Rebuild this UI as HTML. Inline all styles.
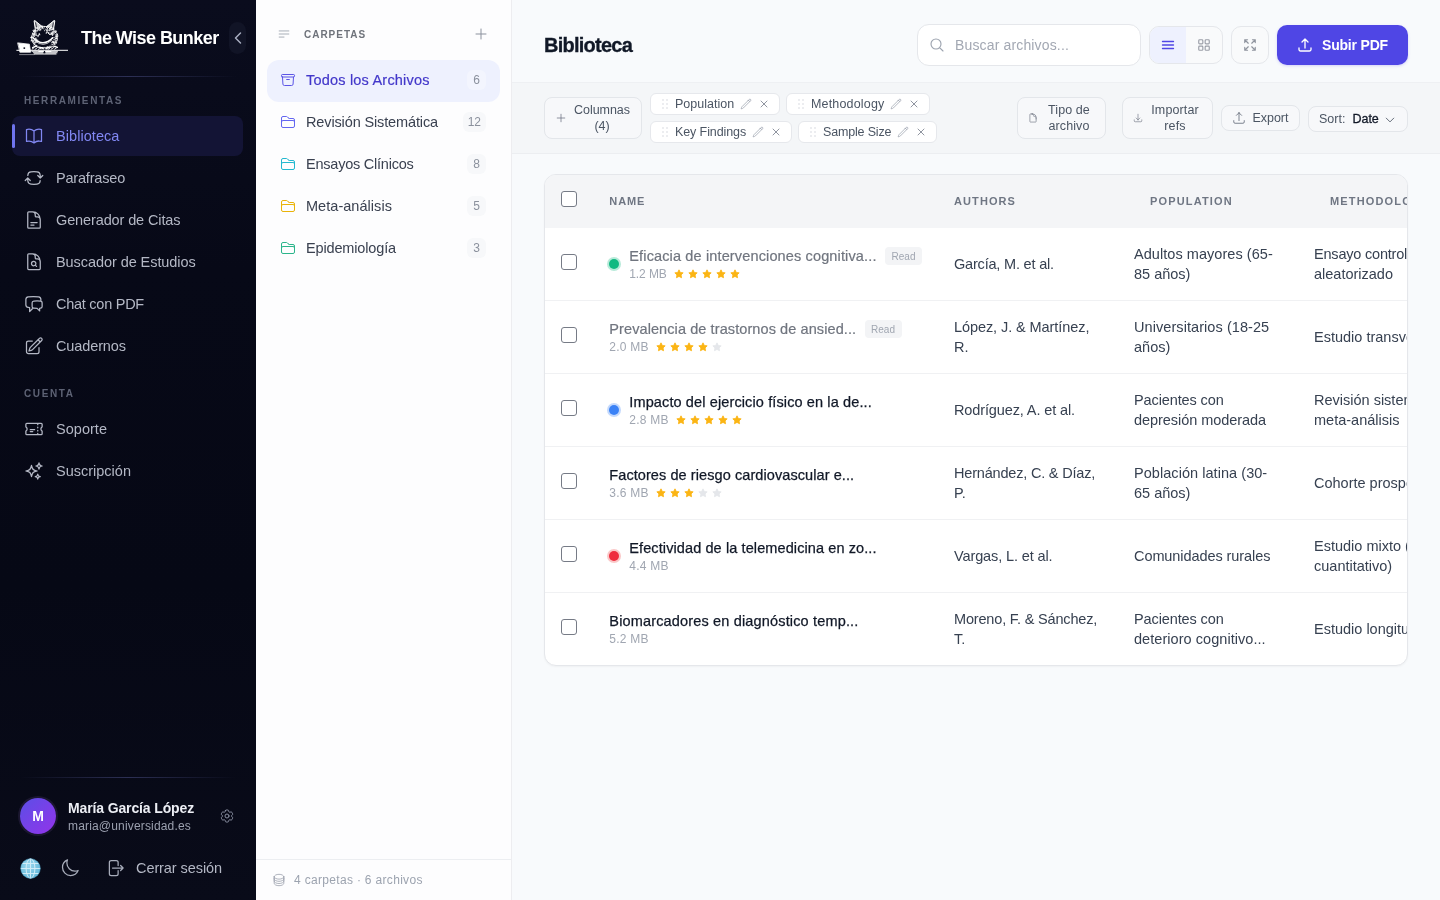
<!DOCTYPE html>
<html lang="es">
<head>
<meta charset="utf-8">
<title>Biblioteca</title>
<style>
*{box-sizing:border-box;margin:0;padding:0}
html,body{width:1440px;height:900px;overflow:hidden}
body{font-family:"Liberation Sans",sans-serif;background:#f8fafc;color:#111827;position:relative;-webkit-font-smoothing:antialiased}
.abs{position:absolute}
svg{display:block}
/* ---------- left sidebar ---------- */
#side{will-change:transform;position:absolute;left:0;top:0;width:256px;height:900px;background:linear-gradient(180deg,#0a0c1d 0%,#070917 30%,#060815 65%,#090b19 100%);color:#c9ccd6}
#side .brand{position:absolute;left:81px;top:27px;font-size:18px;font-weight:700;color:#fff;letter-spacing:-0.55px;white-space:nowrap;line-height:22px}
#side .collapse{position:absolute;left:229px;top:22px;width:17px;height:32px;border-radius:9px;background:#111426}
#side .hr{position:absolute;left:20px;width:216px;height:1px;background:linear-gradient(90deg,rgba(60,64,110,0),rgba(60,64,110,.7) 50%,rgba(60,64,110,0))}
#side .sec{position:absolute;left:24px;font-size:10px;letter-spacing:1.6px;color:#5d6274;font-weight:700;line-height:12px}
#side .item{position:absolute;left:12px;width:231px;height:40px;border-radius:8px;font-size:14.5px;color:#b4b8c5;line-height:40px;padding-left:44px;letter-spacing:0.05px;white-space:nowrap}
#side .item svg{position:absolute;left:12px;top:10px}
#side .item.on{background:#131435;color:#8187f2}
#side .item.on:before{content:"";position:absolute;left:0;top:8px;width:3px;height:24px;border-radius:2px;background:#6f74ee}
#side .avatar{position:absolute;left:20px;top:798px;width:36px;height:36px;border-radius:50%;background:linear-gradient(135deg,#5b4fe6,#9333ea);color:#fff;font-size:14px;font-weight:700;text-align:center;line-height:36px;box-shadow:0 0 0 2px #1b1730}
#side .uname{position:absolute;left:68px;top:799px;font-size:14px;font-weight:700;color:#eceef4;letter-spacing:-0.13px;line-height:18px;white-space:nowrap}
#side .umail{position:absolute;left:68px;top:818px;font-size:12px;color:#9ba0af;letter-spacing:0.17px;line-height:16px;white-space:nowrap}
#side .logout{position:absolute;left:136px;top:858px;font-size:14.5px;color:#b4b8c5;line-height:20px;letter-spacing:-0.08px;white-space:nowrap}
/* ---------- folders panel ---------- */
#folders{will-change:transform;position:absolute;left:256px;top:0;width:256px;height:900px;background:#fdfdfe;border-right:1px solid #ededf0}
#folders .ttl{position:absolute;left:48px;top:29px;font-size:10px;letter-spacing:0.98px;font-weight:700;color:#6f737b;line-height:12px}
#folders .f{position:absolute;left:11px;width:233px;height:42px;border-radius:12px;font-size:14.5px;color:#3a4150;line-height:40px;padding-left:39px;white-space:nowrap}
#folders .f svg{position:absolute;left:13px;top:12px}
#folders .f.on{background:#eef1fe;color:#4338ca;-webkit-text-stroke:0.2px #4338ca}
#folders .f .n{position:absolute;right:14px;top:10px;height:20px;min-width:19px;padding:0 5px;border-radius:6px;background:#f7f8fa;color:#8b919d;font-size:12px;line-height:20px;text-align:center;-webkit-text-stroke:0}
#folders .f.on .n{background:rgba(255,255,255,.3)}
#folders .foot{position:absolute;left:0;top:859px;width:255px;height:41px;border-top:1px solid #eceef1;font-size:12px;color:#9ca3af;line-height:40px;padding-left:38px;letter-spacing:0.32px}
/* ---------- main ---------- */
#main{will-change:transform;position:absolute;left:512px;top:0;width:928px;height:900px;background:#f8fafc}
#hdr{position:absolute;left:0;top:0;width:928px;height:83px;border-bottom:1px solid #eef0f3}
#hdr h1{position:absolute;left:32px;top:32px;font-size:20px;font-weight:700;letter-spacing:-0.75px;color:#111827;line-height:26px;-webkit-text-stroke:0.3px #111827}
#tool{position:absolute;left:0;top:83px;width:928px;height:71px;padding-top:0;background:#f4f6f8;border-bottom:1px solid #eceef1}
.btn{position:absolute;border:1px solid #e3e6ea;border-radius:8px;background:#f7f8fa;font-size:12.5px;color:#4b5563;line-height:16px;text-align:center;white-space:nowrap}
.chip{position:absolute;height:22px;border:1px solid #e6e8ec;border-radius:6px;background:#fff;font-size:12.5px;color:#4b5563;line-height:19px;white-space:nowrap}
.search{position:absolute;border:1px solid #e5e7eb;border-radius:12px;background:#fff}
.search span{position:absolute;left:37px;top:11px;font-size:14px;color:#a3a8b3;letter-spacing:0.15px;line-height:18px;white-space:nowrap}
.tog{position:absolute;border:1px solid #e5e7eb;border-radius:10px;background:#f9fafb;overflow:hidden}
.tog .tl{position:absolute;left:0;top:0;width:36px;height:36px;background:#eef1fe}
.upbtn{position:absolute;border-radius:10px;background:#4f46e5;box-shadow:0 1px 3px rgba(79,70,229,.22)}
.upbtn span{position:absolute;left:45px;top:11px;font-size:14px;font-weight:700;color:#fff;letter-spacing:-0.19px;line-height:18px;white-space:nowrap}
#card{position:absolute;border:1px solid #e5e7eb;border-radius:12px;background:#fff;overflow:hidden;box-shadow:0 1px 2px rgba(0,0,0,.04)}
#card>div{position:absolute}
#card .thead{left:0;top:0;width:864px;height:53px;background:#f4f5f7}
#card .th{font-size:11px;font-weight:700;color:#6f7683;line-height:14px;white-space:nowrap}
#card .cb{width:16px;height:16px;border:1px solid #767b86;border-radius:3px;background:#fff}
#card .sep{left:0;width:864px;height:1px;background:#f0f1f3}
#card .dot{width:10px;height:10px;border-radius:50%}
#card .ttl{font-size:14.5px;color:#111827;line-height:20px;white-space:nowrap;-webkit-text-stroke:0.25px #111827}
#card .ttl.rd{color:#70757f;-webkit-text-stroke:0.2px #70757f}
#card .sz{font-size:12px;color:#a0a6b1;line-height:16px;white-space:nowrap;letter-spacing:-0.1px}
#card .stars{display:inline-block;margin-left:7px;vertical-align:top;margin-top:1px}
#card .stars svg{display:inline-block;margin-right:4px}
#card .rb{width:36px;height:18px;border-radius:4px;background:#f3f4f6;color:#a0a6b1;font-size:10px;line-height:20px;text-align:center}
#card .td{font-size:14.5px;color:#374151;line-height:20px;white-space:nowrap;margin-top:-1px}
</style>
</head>
<body>
<div id="side">
  <div class="logo" style="position:absolute;left:10px;top:12px;width:70px;height:50px"><svg width="70" height="50" viewBox="0 0 70 50" fill="none" stroke-linecap="round" stroke-linejoin="round">
<g stroke="#fff">
<path d="M25.2 16.6 L24.1 8.9 Q24.3 8.2 25 8.7 L32.2 14.6" fill="#fff" fill-opacity=".8" stroke-width="1"/>
<path d="M36.6 14.6 L44 8.6 Q44.8 8.2 44.8 9 L43.6 16.8" fill="#fff" fill-opacity=".8" stroke-width="1"/>
<path d="M45.1 25.2L48.0 24.2M45.4 26.4L47.2 26.6M45.5 26.9L47.2 26.3M45.7 28.4L47.0 28.1M45.4 29.7L46.8 30.0M43.3 30.2L46.4 31.3M43.3 30.4L44.9 32.2M43.2 31.6L45.0 32.6M41.5 32.1L43.5 33.1M40.8 33.2L41.8 34.6M39.9 33.4L40.9 35.7M39.3 34.1L39.3 36.0M37.5 34.3L39.4 36.5M36.9 35.1L37.2 36.1M36.2 35.1L36.3 36.9M34.0 34.7L33.6 36.9M33.1 34.8L31.6 36.9M32.0 35.0L31.3 35.9M30.5 35.1L30.5 36.6M29.8 34.4L29.4 35.4M29.4 33.4L27.8 34.7M28.3 33.1L26.2 34.2M27.3 32.7L25.0 33.6M25.3 31.9L24.5 32.7M24.8 31.5L23.8 33.1M25.2 30.3L23.3 31.3M24.4 29.1L22.7 29.9M23.6 28.5L21.0 28.8M23.1 27.4L21.3 28.8M22.6 26.0L20.5 25.4M23.2 25.5L21.5 25.2M23.8 24.9L21.3 25.5M24.0 23.7L21.7 24.1M23.7 22.9L22.3 21.7M24.6 21.6L22.3 21.1M25.1 21.0L23.0 18.7M25.2 19.8L23.4 19.8M26.2 19.3L23.4 18.3M25.9 18.2L24.2 17.9M28.2 18.2L27.6 15.6M29.0 16.7L28.0 15.7M29.2 16.5L29.2 14.9M30.9 16.7L31.2 14.0M32.4 15.6L32.7 13.8M32.9 15.9L31.4 14.5M33.9 16.2L34.3 14.3M36.1 16.0L37.9 14.0M37.2 16.3L37.0 14.6M37.4 16.6L39.2 14.7M39.4 16.8L41.1 15.4M39.8 16.7L41.5 15.3M41.3 17.8L42.9 17.1M42.2 17.9L43.4 16.3M43.3 18.5L43.9 17.0M42.8 19.8L45.9 18.7M44.5 20.1L46.5 19.4M44.7 21.3L45.6 19.9M45.6 22.8L47.7 23.4M46.1 23.2L47.7 22.2M45.3 24.2L47.4 24.1M47.1 25.0L47.0 26.7M47.4 27.5L46.8 29.2M45.8 30.3L44.7 31.7M44.1 33.0L42.6 34.1M41.9 34.6L40.1 35.5M38.8 35.6L36.8 36.0M35.6 35.7L33.7 35.8M32.8 35.8L30.9 35.5M30.3 35.9L28.4 35.3M27.4 34.4L25.8 33.4M24.3 32.1L23.2 30.7M23.0 30.4L22.2 28.8M21.6 27.6L21.3 25.9M21.5 25.6L21.7 23.9M22.2 22.8L22.8 21.3M23.6 19.6L24.8 18.3M25.1 17.7L26.6 16.5M28.3 16.0L30.1 15.3M30.6 15.1L32.6 14.7M33.5 14.5L35.6 14.5M36.5 14.7L38.5 15.1M39.8 15.2L41.6 16.0M42.8 16.8L44.3 18.0M44.8 19.4L45.7 20.8M46.6 20.9L47.2 22.6M46.7 24.1L46.8 25.7M28.0 22.4l0.7 0.2M28.8 22.0l-1.0 0.8M28.0 23.4l-0.3 0.6M28.8 17.7l1.0 0.8M24.9 22.2l-1.2 0.0M27.6 22.8l-0.0 0.8M27.2 22.7l-0.4 0.5M24.7 19.6l0.8 0.0M25.1 18.4l1.3 0.3M27.3 16.5l0.7 0.3M29.2 21.4l0.5 0.5M24.1 22.4l-0.7 0.4M28.3 23.7l-0.2 1.1M27.2 21.0l-0.5 0.7M29.2 22.3l-0.5 1.1M29.0 22.5l1.2 0.3M24.9 21.2l-0.2 1.2M26.5 22.0l-0.1 0.8M27.5 21.6l0.7 0.1M26.0 22.6l-0.6 0.6M25.3 20.5l0.3 0.5M26.6 21.0l-0.7 0.7M27.4 23.2l-0.7 0.1M27.4 18.0l0.0 1.2M24.9 22.4l-0.7 1.1M25.1 23.7l-0.6 0.8M38.4 21.5l0.7 0.1M43.0 21.7l0.5 0.5M43.0 22.1l-1.0 0.4M39.8 22.1l0.6 0.7M41.5 22.4l0.9 0.9M42.8 19.7l0.9 0.9M39.4 22.4l0.9 0.0M37.7 20.6l0.8 0.6M42.0 20.3l0.8 0.2M40.7 20.4l0.4 0.6M38.0 18.7l-0.8 0.7M39.5 16.5l0.3 0.8M41.6 20.1l-0.7 0.8M43.4 21.2l-1.0 0.3M39.9 16.6l0.9 0.4M36.9 20.1l-1.0 0.7M37.3 18.3l-0.6 0.9M40.3 20.9l0.8 0.3M42.8 22.4l-0.2 1.0M38.1 17.8l0.0 0.6M41.1 16.9l-0.0 1.0M39.7 19.3l-0.5 0.6M41.9 21.1l-0.5 0.6M40.0 16.3l0.0 0.9M37.2 20.6l-0.8 0.7M39.6 19.3l0.7 0.3M40.1 18.0l-0.1 0.6M41.9 21.0l-0.6 0.9M39.3 18.3l-0.0 0.9M39.0 20.5l-0.7 0.2M27.1 28.1l0.9 0.1M25.9 25.8l0.1 0.8M25.5 31.3l0.8 0.6M26.0 30.2l-0.7 0.1M25.7 26.6l-1.0 0.4M25.2 31.3l0.0 0.6M26.5 28.5l0.1 0.8M25.8 29.9l0.6 1.0M26.9 28.5l-0.6 0.3M26.7 27.4l-0.8 0.2M43.2 29.4l-1.0 0.0M43.3 29.5l0.4 0.5M45.8 29.6l0.8 1.0M44.2 29.5l-0.0 0.7M42.7 30.1l-1.1 0.4M42.8 25.9l-1.0 0.2M44.1 27.3l-0.6 0.7M44.2 25.6l0.4 0.5M44.9 27.5l0.1 0.8M43.6 30.5l-0.8 0.1M32.6 16.5l-0.2 0.9M35.6 17.8l1.0 0.7M31.6 17.2l-1.2 0.4M32.3 17.4l0.5 0.4M33.4 17.6l0.6 0.5M29.3 16.6l-0.6 0.6M30.7 17.8l0.3 0.8M37.3 17.5l-0.7 0.1M29.6 17.2l-0.7 0.3M34.0 18.0l0.3 0.9" stroke-width=".85" stroke-opacity=".95"/>
<path d="M23.2 26 Q33.2 35.6 42.8 25.8" stroke-width="1.6"/>
<path d="M24.6 28.6 Q33.4 36.6 41.6 28.4" stroke-width=".9" stroke-opacity=".8"/>
<path d="M22.6 35.6 Q27.6 32.6 33 36.6 M36 36.6 Q41.6 32.6 47.4 35.4" stroke-width="1.3"/>
<path d="M22.2 37 l2 -1.4 M25 37.4 l2.4 -1.8 M28.4 37.4 l2 -1.2 M38 37.4 l2 -1.6 M41.2 37.2 l2.4 -1.6 M44.6 37.2 l1.8 -1.2" stroke-width=".9"/>
<path d="M22 39.2 H27.5 M28.6 39.4 H33.4 M35.6 39.4 H41 M42 39.2 H47.4 M23.4 40.8 H33 M35.8 40.8 H47 M24.4 42 H46" stroke-width="1.1"/>
<path d="M6.8 38.3 H57.6" stroke-width="1"/>
<path d="M9.6 42.6 H24" stroke-width=".7" stroke-opacity=".7"/>
<path d="M8 30.9 L19.4 32.2 L20.6 40.2 L10.2 40.2 Z" fill="#fff" stroke-width=".8"/>
</g>
<path d="M26.4 14.8 L25.6 10.8 M42.6 15 L43.3 10.8" stroke="#0a0c1c" stroke-width=".8"/>
<path d="M31.6 17 Q30 21 30.4 25.6 Q32.4 27.4 34.6 25.6 Q35.2 21 33.6 17 Z" fill="#0a0c1c"/>
<ellipse cx="27.6" cy="21.6" rx="1.1" ry="1.9" fill="#0a0c1c"/>
<path d="M38.6 19.6 q1.6 -1.6 3 .4 q-1.2 1.6 -3 -.4z" fill="#0a0c1c"/>
<path d="M26 31.6 Q33.4 37.2 40.6 31.4" stroke="#0a0c1c" stroke-width="1.5"/>
<path d="M27.6 34 h4.6 M38.4 33.8 h5" stroke="#0a0c1c" stroke-width="1"/>
<circle cx="14.3" cy="36.1" r=".95" fill="#0a0c1c"/>
</svg></div>
  <div class="brand">The Wise Bunker</div>
  <div class="collapse"><svg width="16" height="16" viewBox="0 0 24 24" fill="none" stroke="#a9aec0" stroke-width="2.2" stroke-linecap="round" stroke-linejoin="round" style="position:absolute;left:1px;top:8px"><path d="M15.75 19.5 8.25 12l7.5-7.5"/></svg></div>
  <div class="hr" style="top:76px"></div>
  <div class="sec" style="top:95px">HERRAMIENTAS</div>
  <div class="item on" style="top:116px;letter-spacing:0.06px"><svg width="20" height="20" viewBox="0 0 24 24" fill="none" stroke="currentColor" stroke-width="1.5" stroke-linecap="round" stroke-linejoin="round" style=""><path d="M12 6.042A8.967 8.967 0 0 0 6 3.75c-1.052 0-2.062.18-3 .512v14.25A8.987 8.987 0 0 1 6 18c2.305 0 4.408.867 6 2.292m0-14.25a8.966 8.966 0 0 1 6-2.292c1.052 0 2.062.18 3 .512v14.25A8.987 8.987 0 0 0 18 18a8.967 8.967 0 0 0-6 2.292m0-14.25v14.25"/></svg>Biblioteca</div>
  <div class="item" style="top:158px;letter-spacing:-0.19px"><svg width="20" height="20" viewBox="0 0 24 24" fill="none" stroke="currentColor" stroke-width="1.5" stroke-linecap="round" stroke-linejoin="round" style=""><path d="M19.5 12c0-1.232-.046-2.453-.138-3.662a4.006 4.006 0 0 0-3.7-3.7 48.678 48.678 0 0 0-7.324 0 4.006 4.006 0 0 0-3.7 3.7c-.017.22-.032.441-.046.662M19.5 12l3-3m-3 3-3-3m-12 3c0 1.232.046 2.453.138 3.662a4.006 4.006 0 0 0 3.7 3.7 48.656 48.656 0 0 0 7.324 0 4.006 4.006 0 0 0 3.7-3.7c.017-.22.032-.441.046-.662M4.5 12l3 3m-3-3-3 3"/></svg>Parafraseo</div>
  <div class="item" style="top:200px;letter-spacing:-0.12px"><svg width="20" height="20" viewBox="0 0 24 24" fill="none" stroke="currentColor" stroke-width="1.5" stroke-linecap="round" stroke-linejoin="round" style=""><path d="M19.5 14.25v-2.625a3.375 3.375 0 0 0-3.375-3.375h-1.5A1.125 1.125 0 0 1 13.5 7.125v-1.5a3.375 3.375 0 0 0-3.375-3.375H8.25m0 12.75h7.5m-7.5 3H12M10.5 2.25H5.625c-.621 0-1.125.504-1.125 1.125v17.25c0 .621.504 1.125 1.125 1.125h12.75c.621 0 1.125-.504 1.125-1.125V11.25a9 9 0 0 0-9-9Z"/></svg>Generador de Citas</div>
  <div class="item" style="top:242px;letter-spacing:-0.07px"><svg width="20" height="20" viewBox="0 0 24 24" fill="none" stroke="currentColor" stroke-width="1.5" stroke-linecap="round" stroke-linejoin="round" style=""><path d="M19.5 14.25v-2.625a3.375 3.375 0 0 0-3.375-3.375h-1.5A1.125 1.125 0 0 1 13.5 7.125v-1.5a3.375 3.375 0 0 0-3.375-3.375H8.25m5.231 13.481L15 17.25m-4.5-15H5.625c-.621 0-1.125.504-1.125 1.125v16.5c0 .621.504 1.125 1.125 1.125h12.75c.621 0 1.125-.504 1.125-1.125V11.25a9 9 0 0 0-9-9Zm3.75 11.625a2.625 2.625 0 1 1-5.25 0 2.625 2.625 0 0 1 5.25 0Z"/></svg>Buscador de Estudios</div>
  <div class="item" style="top:284px;letter-spacing:-0.26px"><svg width="20" height="20" viewBox="0 0 24 24" fill="none" stroke="currentColor" stroke-width="1.5" stroke-linecap="round" stroke-linejoin="round" style=""><path d="M20.25 8.511c.884.284 1.5 1.128 1.5 2.097v4.286c0 1.136-.847 2.1-1.98 2.193-.34.027-.68.052-1.02.072v3.091l-3-3c-1.354 0-2.694-.055-4.02-.163a2.115 2.115 0 0 1-.825-.242m9.345-8.334a2.126 2.126 0 0 0-.476-.095 48.64 48.64 0 0 0-8.048 0c-1.131.094-1.976 1.057-1.976 2.192v4.286c0 .837.46 1.58 1.155 1.951m9.345-8.334V6.637c0-1.621-1.152-3.026-2.76-3.235A48.455 48.455 0 0 0 11.25 3c-2.115 0-4.198.137-6.24.402-1.608.209-2.76 1.614-2.76 3.235v6.226c0 1.621 1.152 3.026 2.76 3.235.577.075 1.157.14 1.74.194V21l4.155-4.155"/></svg>Chat con PDF</div>
  <div class="item" style="top:326px;letter-spacing:-0.12px"><svg width="20" height="20" viewBox="0 0 24 24" fill="none" stroke="currentColor" stroke-width="1.5" stroke-linecap="round" stroke-linejoin="round" style=""><path d="m16.862 4.487 1.687-1.688a1.875 1.875 0 1 1 2.652 2.652L10.582 16.07a4.5 4.5 0 0 1-1.897 1.13L6 18l.8-2.685a4.5 4.5 0 0 1 1.13-1.897l8.932-8.931Zm0 0L19.5 7.125M18 14v4.75A2.25 2.25 0 0 1 15.75 21H5.25A2.25 2.25 0 0 1 3 18.75V8.25A2.25 2.25 0 0 1 5.25 6H10"/></svg>Cuadernos</div>
  <div class="item" style="top:409px;letter-spacing:0.03px"><svg width="20" height="20" viewBox="0 0 24 24" fill="none" stroke="currentColor" stroke-width="1.5" stroke-linecap="round" stroke-linejoin="round" style=""><path d="M16.5 6v.75m0 3v.75m0 3v.75m0 3V18m-9-5.25h5.25M7.5 15h3M3.375 5.25c-.621 0-1.125.504-1.125 1.125v3.026a2.999 2.999 0 0 1 0 5.198v3.026c0 .621.504 1.125 1.125 1.125h17.25c.621 0 1.125-.504 1.125-1.125v-3.026a2.999 2.999 0 0 1 0-5.198V6.375c0-.621-.504-1.125-1.125-1.125H3.375Z"/></svg>Soporte</div>
  <div class="item" style="top:451px;letter-spacing:0px"><svg width="20" height="20" viewBox="0 0 24 24" fill="none" stroke="currentColor" stroke-width="1.5" stroke-linecap="round" stroke-linejoin="round" style=""><path d="M9.813 15.904 9 18.75l-.813-2.846a4.5 4.5 0 0 0-3.09-3.09L2.25 12l2.846-.813a4.5 4.5 0 0 0 3.09-3.09L9 5.25l.813 2.846a4.5 4.5 0 0 0 3.09 3.09L15.75 12l-2.846.813a4.5 4.5 0 0 0-3.09 3.09ZM18.259 8.715 18 9.75l-.259-1.035a3.375 3.375 0 0 0-2.455-2.456L14.25 6l1.036-.259a3.375 3.375 0 0 0 2.455-2.456L18 2.25l.259 1.035a3.375 3.375 0 0 0 2.456 2.456L21.75 6l-1.035.259a3.375 3.375 0 0 0-2.456 2.456ZM16.894 20.567 16.5 21.75l-.394-1.183a2.25 2.25 0 0 0-1.423-1.423L13.5 18.75l1.183-.394a2.25 2.25 0 0 0 1.423-1.423l.394-1.183.394 1.183a2.25 2.25 0 0 0 1.423 1.423l1.183.394-1.183.394a2.25 2.25 0 0 0-1.423 1.423Z"/></svg>Suscripción</div>
  <div class="sec" style="top:388px">CUENTA</div>
  <div class="hr" style="top:777px"></div>
  <div class="avatar">M</div>
  <div class="uname">María García López</div>
  <div class="umail">maria@universidad.es</div>
  <div class="abs" style="left:219px;top:808px;color:#8a90a2"><svg width="16" height="16" viewBox="0 0 24 24" fill="none" stroke="currentColor" stroke-width="1.5" stroke-linecap="round" stroke-linejoin="round" style=""><path d="M9.594 3.94c.09-.542.56-.94 1.11-.94h2.593c.55 0 1.02.398 1.11.94l.213 1.281c.063.374.313.686.645.87.074.04.147.083.22.127.325.196.72.257 1.075.124l1.217-.456a1.125 1.125 0 0 1 1.37.49l1.296 2.247a1.125 1.125 0 0 1-.26 1.431l-1.003.827c-.293.241-.438.613-.43.992a7.723 7.723 0 0 1 0 .255c-.008.378.137.75.43.991l1.004.827c.424.35.534.955.26 1.43l-1.298 2.247a1.125 1.125 0 0 1-1.369.491l-1.217-.456c-.355-.133-.75-.072-1.076.124a6.47 6.47 0 0 1-.22.128c-.331.183-.581.495-.644.869l-.213 1.281c-.09.543-.56.94-1.11.94h-2.594c-.55 0-1.019-.398-1.11-.94l-.213-1.281c-.062-.374-.312-.686-.644-.87a6.52 6.52 0 0 1-.22-.127c-.325-.196-.72-.257-1.076-.124l-1.217.456a1.125 1.125 0 0 1-1.369-.49l-1.297-2.247a1.125 1.125 0 0 1 .26-1.431l1.004-.827c.292-.24.437-.613.43-.991a6.932 6.932 0 0 1 0-.255c.007-.38-.138-.751-.43-.992l-1.004-.827a1.125 1.125 0 0 1-.26-1.43l1.297-2.247a1.125 1.125 0 0 1 1.37-.491l1.216.456c.356.133.751.072 1.076-.124.072-.044.146-.086.22-.128.332-.183.582-.495.644-.869l.214-1.28Z M15 12a3 3 0 1 1-6 0 3 3 0 0 1 6 0Z"/></svg></div>
  <div class="abs" style="left:20px;top:857.5px"><svg width="21" height="21" viewBox="0 0 22 22"><defs><radialGradient id="gg" cx=".4" cy=".35" r=".75"><stop offset="0" stop-color="#9bd9f0"/><stop offset="1" stop-color="#5fb4d6"/></radialGradient></defs><circle cx="11" cy="11" r="10.3" fill="url(#gg)"/><g fill="none" stroke="#d7f0fa" stroke-width="1.1" stroke-opacity=".9"><ellipse cx="11" cy="11" rx="4.6" ry="10.2"/><path d="M11 .8v20.4M.8 11h20.4M2.4 5.8h17.2M2.4 16.2h17.2"/></g><circle cx="11" cy="11" r="10.3" fill="none" stroke="#4a9fc4" stroke-width=".5"/></svg></div>
  <div class="abs" style="left:60px;top:858px;color:#a7acba"><svg width="20" height="20" viewBox="0 0 24 24" fill="none" stroke="currentColor" stroke-width="1.5" stroke-linecap="round" stroke-linejoin="round" style=""><path d="M21.752 15.002A9.72 9.72 0 0 1 18 15.75c-5.385 0-9.75-4.365-9.75-9.75 0-1.33.266-2.597.748-3.752A9.753 9.753 0 0 0 3 11.25C3 16.635 7.365 21 12.75 21a9.753 9.753 0 0 0 9.002-5.998Z"/></svg></div>
  <div class="abs" style="left:105px;top:858px;color:#a7acba"><svg width="20" height="20" viewBox="0 0 24 24" fill="none" stroke="currentColor" stroke-width="1.5" stroke-linecap="round" stroke-linejoin="round" style=""><path d="M15.75 9V5.25A2.25 2.25 0 0 0 13.5 3h-6a2.25 2.25 0 0 0-2.25 2.25v13.5A2.25 2.25 0 0 0 7.5 21h6a2.25 2.25 0 0 0 2.25-2.25V15m3 0 3-3m0 0-3-3m3 3H9"/></svg></div>
  <div class="logout">Cerrar sesión</div>
</div>
<div id="folders">
  <div class="abs" style="left:21px;top:27px;color:#9ca3af"><svg width="14" height="14" viewBox="0 0 24 24" fill="none" stroke="currentColor" stroke-width="1.5" stroke-linecap="round" stroke-linejoin="round" style=""><path d="M3.75 6.75h16.5M3.75 12h16.5m-16.5 5.25H12"/></svg></div>
  <div class="ttl">CARPETAS</div>
  <div class="abs" style="left:217px;top:26px;color:#8b919d"><svg width="16" height="16" viewBox="0 0 24 24" fill="none" stroke="currentColor" stroke-width="1.5" stroke-linecap="round" stroke-linejoin="round" style=""><path d="M12 4.5v15m7.5-7.5h-15"/></svg></div>
  <div class="f on" style="top:60px"><span style="letter-spacing:0.2px"><svg width="16" height="16" viewBox="0 0 24 24" fill="none" stroke="#5b54e6" stroke-width="1.5" stroke-linecap="round" stroke-linejoin="round" style=""><path d="m20.25 7.5-.625 10.632a2.25 2.25 0 0 1-2.247 2.118H6.622a2.25 2.25 0 0 1-2.247-2.118L3.75 7.5M10 11.25h4M3.375 7.5h17.25c.621 0 1.125-.504 1.125-1.125v-1.5c0-.621-.504-1.125-1.125-1.125H3.375c-.621 0-1.125.504-1.125 1.125v1.5c0 .621.504 1.125 1.125 1.125Z"/></svg>Todos los Archivos</span><span class="n">6</span></div>
  <div class="f" style="top:102px"><span style="letter-spacing:-0.13px"><svg width="16" height="16" viewBox="0 0 24 24" fill="none" stroke="#6366f1" stroke-width="1.5" stroke-linecap="round" stroke-linejoin="round" style=""><path d="M2.25 12.75V12A2.25 2.25 0 0 1 4.5 9.75h15A2.25 2.25 0 0 1 21.75 12v.75m-8.69-6.44-2.12-2.12a1.5 1.5 0 0 0-1.061-.44H4.5A2.25 2.25 0 0 0 2.25 6v12a2.25 2.25 0 0 0 2.25 2.25h15A2.25 2.25 0 0 0 21.75 18V9a2.25 2.25 0 0 0-2.25-2.25h-5.379a1.5 1.5 0 0 1-1.06-.44Z"/></svg>Revisión Sistemática</span><span class="n">12</span></div>
  <div class="f" style="top:144px"><span style="letter-spacing:-0.23px"><svg width="16" height="16" viewBox="0 0 24 24" fill="none" stroke="#22b8cf" stroke-width="1.5" stroke-linecap="round" stroke-linejoin="round" style=""><path d="M2.25 12.75V12A2.25 2.25 0 0 1 4.5 9.75h15A2.25 2.25 0 0 1 21.75 12v.75m-8.69-6.44-2.12-2.12a1.5 1.5 0 0 0-1.061-.44H4.5A2.25 2.25 0 0 0 2.25 6v12a2.25 2.25 0 0 0 2.25 2.25h15A2.25 2.25 0 0 0 21.75 18V9a2.25 2.25 0 0 0-2.25-2.25h-5.379a1.5 1.5 0 0 1-1.06-.44Z"/></svg>Ensayos Clínicos</span><span class="n">8</span></div>
  <div class="f" style="top:186px"><span style="letter-spacing:0.04px"><svg width="16" height="16" viewBox="0 0 24 24" fill="none" stroke="#eab308" stroke-width="1.5" stroke-linecap="round" stroke-linejoin="round" style=""><path d="M2.25 12.75V12A2.25 2.25 0 0 1 4.5 9.75h15A2.25 2.25 0 0 1 21.75 12v.75m-8.69-6.44-2.12-2.12a1.5 1.5 0 0 0-1.061-.44H4.5A2.25 2.25 0 0 0 2.25 6v12a2.25 2.25 0 0 0 2.25 2.25h15A2.25 2.25 0 0 0 21.75 18V9a2.25 2.25 0 0 0-2.25-2.25h-5.379a1.5 1.5 0 0 1-1.06-.44Z"/></svg>Meta-análisis</span><span class="n">5</span></div>
  <div class="f" style="top:228px"><span style="letter-spacing:-0.15px"><svg width="16" height="16" viewBox="0 0 24 24" fill="none" stroke="#2bb58b" stroke-width="1.5" stroke-linecap="round" stroke-linejoin="round" style=""><path d="M2.25 12.75V12A2.25 2.25 0 0 1 4.5 9.75h15A2.25 2.25 0 0 1 21.75 12v.75m-8.69-6.44-2.12-2.12a1.5 1.5 0 0 0-1.061-.44H4.5A2.25 2.25 0 0 0 2.25 6v12a2.25 2.25 0 0 0 2.25 2.25h15A2.25 2.25 0 0 0 21.75 18V9a2.25 2.25 0 0 0-2.25-2.25h-5.379a1.5 1.5 0 0 1-1.06-.44Z"/></svg>Epidemiología</span><span class="n">3</span></div>
  <div class="foot"><svg width="14" height="14" viewBox="0 0 24 24" fill="none" stroke="#a3a8b3" stroke-width="1.5" stroke-linecap="round" stroke-linejoin="round" style="position:absolute;left:16px;top:13px"><path d="M20.25 6.375c0 2.278-3.694 4.125-8.25 4.125S3.75 8.653 3.75 6.375m16.5 0c0-2.278-3.694-4.125-8.25-4.125S3.75 4.097 3.75 6.375m16.5 0v11.25c0 2.278-3.694 4.125-8.25 4.125s-8.25-1.847-8.25-4.125V6.375m16.5 0v3.75m-16.5-3.75v3.75m16.5 0v3.75C20.25 16.153 16.556 18 12 18s-8.25-1.847-8.25-4.125v-3.75m16.5 0c0 2.278-3.694 4.125-8.25 4.125s-8.25-1.847-8.25-4.125"/></svg>4 carpetas · 6 archivos</div>
</div>
<div id="main">
  <div id="hdr"><h1>Biblioteca</h1>
  <div class="search" style="left:405px;top:24px;width:224px;height:42px"><svg width="16" height="16" viewBox="0 0 24 24" fill="none" stroke="#9ca3af" stroke-width="1.7" stroke-linecap="round" stroke-linejoin="round" style="position:absolute;left:11px;top:12px"><path d="m21 21-5.197-5.197m0 0A7.5 7.5 0 1 0 5.196 5.196a7.5 7.5 0 0 0 10.607 10.607Z"/></svg><span>Buscar archivos...</span></div>
  <div class="tog" style="left:637px;top:26px;width:74px;height:38px"><div class="tl"><svg width="16" height="16" viewBox="0 0 24 24" fill="none" stroke="#4f46e5" stroke-width="2" stroke-linecap="round" stroke-linejoin="round" style="position:absolute;left:10px;top:10px"><path d="M3.75 6.75h16.5M3.75 12h16.5m-16.5 5.25h16.5"/></svg></div><svg width="14" height="14" viewBox="0 0 24 24" fill="none" stroke="#9b9fa8" stroke-width="2" stroke-linecap="round" stroke-linejoin="round" style="position:absolute;left:47px;top:11px"><rect x="3" y="3" width="7" height="7" rx="1.5"/><rect x="14" y="3" width="7" height="7" rx="1.5"/><rect x="14" y="14" width="7" height="7" rx="1.5"/><rect x="3" y="14" width="7" height="7" rx="1.5"/></svg></div>
  <div class="tog" style="left:719px;top:26px;width:38px;height:38px"><svg width="14" height="14" viewBox="0 0 24 24" fill="none" stroke="#8f949e" stroke-width="2" stroke-linecap="round" stroke-linejoin="round" style="position:absolute;left:11px;top:11px"><path d="m15 15 6 6M15 9l6-6M21 16.2V21h-4.8M21 7.8V3h-4.8M3 16.2V21h4.8M3 21l6-6M3 7.8V3h4.8M9 9 3 3"/></svg></div>
  <div class="upbtn" style="left:765px;top:25px;width:131px;height:40px"><svg width="16" height="16" viewBox="0 0 24 24" fill="none" stroke="#fff" stroke-width="2" stroke-linecap="round" stroke-linejoin="round" style="position:absolute;left:20px;top:12px"><path d="M3 16.5v2.25A2.25 2.25 0 0 0 5.25 21h13.5A2.25 2.25 0 0 0 21 18.75V16.5m-13.5-9L12 3m0 0 4.5 4.5M12 3v13.5"/></svg><span>Subir PDF</span></div>
</div>
<div id="card" style="left:32px;top:174px;width:864px;height:492px">
<div class="thead"></div>
<div class="cb" style="left:16px;top:16px"></div>
<div class="th" style="left:64.3px;top:19px;letter-spacing:0.9px">NAME</div>
<div class="th" style="left:409px;top:19px;letter-spacing:1.09px">AUTHORS</div>
<div class="th" style="left:605px;top:19px;letter-spacing:1.15px">POPULATION</div>
<div class="th" style="left:785px;top:19px;letter-spacing:1.15px">METHODOLOGY</div>
<div class="cb" style="left:16px;top:79px"></div>
<div class="dot" style="left:64px;top:84px;background:#10b981;box-shadow:0 0 0 2px rgba(16,185,129,.3)"></div>
<div class="ttl rd" style="left:84.3px;top:71px;letter-spacing:0.14px">Eficacia de intervenciones cognitiva...</div>
<div class="sz" style="left:84.3px;top:91px">1.2 MB<span class="stars"><svg width="10" height="10" viewBox="0 0 24 24" fill="#fbb514" stroke="#fbb514" stroke-width="2" stroke-linejoin="round"><polygon points="12 2 15.09 8.26 22 9.27 17 14.14 18.18 21.02 12 17.77 5.82 21.02 7 14.14 2 9.27 8.91 8.26 12 2"/></svg><svg width="10" height="10" viewBox="0 0 24 24" fill="#fbb514" stroke="#fbb514" stroke-width="2" stroke-linejoin="round"><polygon points="12 2 15.09 8.26 22 9.27 17 14.14 18.18 21.02 12 17.77 5.82 21.02 7 14.14 2 9.27 8.91 8.26 12 2"/></svg><svg width="10" height="10" viewBox="0 0 24 24" fill="#fbb514" stroke="#fbb514" stroke-width="2" stroke-linejoin="round"><polygon points="12 2 15.09 8.26 22 9.27 17 14.14 18.18 21.02 12 17.77 5.82 21.02 7 14.14 2 9.27 8.91 8.26 12 2"/></svg><svg width="10" height="10" viewBox="0 0 24 24" fill="#fbb514" stroke="#fbb514" stroke-width="2" stroke-linejoin="round"><polygon points="12 2 15.09 8.26 22 9.27 17 14.14 18.18 21.02 12 17.77 5.82 21.02 7 14.14 2 9.27 8.91 8.26 12 2"/></svg><svg width="10" height="10" viewBox="0 0 24 24" fill="#fbb514" stroke="#fbb514" stroke-width="2" stroke-linejoin="round"><polygon points="12 2 15.09 8.26 22 9.27 17 14.14 18.18 21.02 12 17.77 5.82 21.02 7 14.14 2 9.27 8.91 8.26 12 2"/></svg></span></div>
<div class="rb" style="left:340px;top:72px;width:37px">Read</div>
<div class="td" style="left:409px;top:79.5px;letter-spacing:-0.19px">García, M. et al.</div>
<div class="td" style="left:589px;top:69.5px;letter-spacing:0.05px">Adultos mayores (65-</div>
<div class="td" style="left:589px;top:89.5px;letter-spacing:0px">85 años)</div>
<div class="td" style="left:769px;top:69.5px;letter-spacing:-0.2px">Ensayo controlado</div>
<div class="td" style="left:769px;top:89.5px;letter-spacing:0px">aleatorizado</div>
<div class="sep" style="top:125px"></div>
<div class="cb" style="left:16px;top:152px"></div>
<div class="ttl rd" style="left:64.3px;top:144px;letter-spacing:0.09px">Prevalencia de trastornos de ansied...</div>
<div class="sz" style="left:64.3px;top:164px;letter-spacing:0.22px">2.0 MB<span class="stars"><svg width="10" height="10" viewBox="0 0 24 24" fill="#fbb514" stroke="#fbb514" stroke-width="2" stroke-linejoin="round"><polygon points="12 2 15.09 8.26 22 9.27 17 14.14 18.18 21.02 12 17.77 5.82 21.02 7 14.14 2 9.27 8.91 8.26 12 2"/></svg><svg width="10" height="10" viewBox="0 0 24 24" fill="#fbb514" stroke="#fbb514" stroke-width="2" stroke-linejoin="round"><polygon points="12 2 15.09 8.26 22 9.27 17 14.14 18.18 21.02 12 17.77 5.82 21.02 7 14.14 2 9.27 8.91 8.26 12 2"/></svg><svg width="10" height="10" viewBox="0 0 24 24" fill="#fbb514" stroke="#fbb514" stroke-width="2" stroke-linejoin="round"><polygon points="12 2 15.09 8.26 22 9.27 17 14.14 18.18 21.02 12 17.77 5.82 21.02 7 14.14 2 9.27 8.91 8.26 12 2"/></svg><svg width="10" height="10" viewBox="0 0 24 24" fill="#fbb514" stroke="#fbb514" stroke-width="2" stroke-linejoin="round"><polygon points="12 2 15.09 8.26 22 9.27 17 14.14 18.18 21.02 12 17.77 5.82 21.02 7 14.14 2 9.27 8.91 8.26 12 2"/></svg><svg width="10" height="10" viewBox="0 0 24 24" fill="#e5e7eb" stroke="#e5e7eb" stroke-width="2" stroke-linejoin="round"><polygon points="12 2 15.09 8.26 22 9.27 17 14.14 18.18 21.02 12 17.77 5.82 21.02 7 14.14 2 9.27 8.91 8.26 12 2"/></svg></span></div>
<div class="rb" style="left:319.5px;top:145px;width:37px">Read</div>
<div class="td" style="left:409px;top:142.5px;letter-spacing:-0.08px">López, J. & Martínez,</div>
<div class="td" style="left:409px;top:162.5px;letter-spacing:0px">R.</div>
<div class="td" style="left:589px;top:142.5px;letter-spacing:0.07px">Universitarios (18-25</div>
<div class="td" style="left:589px;top:162.5px;letter-spacing:0px">años)</div>
<div class="td" style="left:769px;top:152.5px;letter-spacing:0px">Estudio transversal</div>
<div class="sep" style="top:198px"></div>
<div class="cb" style="left:16px;top:225px"></div>
<div class="dot" style="left:64px;top:230px;background:#3b82f6;box-shadow:0 0 0 2px rgba(59,130,246,.3)"></div>
<div class="ttl" style="left:84.3px;top:217px;letter-spacing:0.12px">Impacto del ejercicio físico en la de...</div>
<div class="sz" style="left:84.3px;top:237px;letter-spacing:0.22px">2.8 MB<span class="stars"><svg width="10" height="10" viewBox="0 0 24 24" fill="#fbb514" stroke="#fbb514" stroke-width="2" stroke-linejoin="round"><polygon points="12 2 15.09 8.26 22 9.27 17 14.14 18.18 21.02 12 17.77 5.82 21.02 7 14.14 2 9.27 8.91 8.26 12 2"/></svg><svg width="10" height="10" viewBox="0 0 24 24" fill="#fbb514" stroke="#fbb514" stroke-width="2" stroke-linejoin="round"><polygon points="12 2 15.09 8.26 22 9.27 17 14.14 18.18 21.02 12 17.77 5.82 21.02 7 14.14 2 9.27 8.91 8.26 12 2"/></svg><svg width="10" height="10" viewBox="0 0 24 24" fill="#fbb514" stroke="#fbb514" stroke-width="2" stroke-linejoin="round"><polygon points="12 2 15.09 8.26 22 9.27 17 14.14 18.18 21.02 12 17.77 5.82 21.02 7 14.14 2 9.27 8.91 8.26 12 2"/></svg><svg width="10" height="10" viewBox="0 0 24 24" fill="#fbb514" stroke="#fbb514" stroke-width="2" stroke-linejoin="round"><polygon points="12 2 15.09 8.26 22 9.27 17 14.14 18.18 21.02 12 17.77 5.82 21.02 7 14.14 2 9.27 8.91 8.26 12 2"/></svg><svg width="10" height="10" viewBox="0 0 24 24" fill="#fbb514" stroke="#fbb514" stroke-width="2" stroke-linejoin="round"><polygon points="12 2 15.09 8.26 22 9.27 17 14.14 18.18 21.02 12 17.77 5.82 21.02 7 14.14 2 9.27 8.91 8.26 12 2"/></svg></span></div>
<div class="td" style="left:409px;top:225.5px;letter-spacing:-0.12px">Rodríguez, A. et al.</div>
<div class="td" style="left:589px;top:215.5px;letter-spacing:-0.11px">Pacientes con</div>
<div class="td" style="left:589px;top:235.5px;letter-spacing:-0.05px">depresión moderada</div>
<div class="td" style="left:769px;top:215.5px;letter-spacing:0px">Revisión sistemática y</div>
<div class="td" style="left:769px;top:235.5px;letter-spacing:0px">meta-análisis</div>
<div class="sep" style="top:271px"></div>
<div class="cb" style="left:16px;top:298px"></div>
<div class="ttl" style="left:64.3px;top:290px;letter-spacing:0.08px">Factores de riesgo cardiovascular e...</div>
<div class="sz" style="left:64.3px;top:310px;letter-spacing:0.22px">3.6 MB<span class="stars"><svg width="10" height="10" viewBox="0 0 24 24" fill="#fbb514" stroke="#fbb514" stroke-width="2" stroke-linejoin="round"><polygon points="12 2 15.09 8.26 22 9.27 17 14.14 18.18 21.02 12 17.77 5.82 21.02 7 14.14 2 9.27 8.91 8.26 12 2"/></svg><svg width="10" height="10" viewBox="0 0 24 24" fill="#fbb514" stroke="#fbb514" stroke-width="2" stroke-linejoin="round"><polygon points="12 2 15.09 8.26 22 9.27 17 14.14 18.18 21.02 12 17.77 5.82 21.02 7 14.14 2 9.27 8.91 8.26 12 2"/></svg><svg width="10" height="10" viewBox="0 0 24 24" fill="#fbb514" stroke="#fbb514" stroke-width="2" stroke-linejoin="round"><polygon points="12 2 15.09 8.26 22 9.27 17 14.14 18.18 21.02 12 17.77 5.82 21.02 7 14.14 2 9.27 8.91 8.26 12 2"/></svg><svg width="10" height="10" viewBox="0 0 24 24" fill="#e5e7eb" stroke="#e5e7eb" stroke-width="2" stroke-linejoin="round"><polygon points="12 2 15.09 8.26 22 9.27 17 14.14 18.18 21.02 12 17.77 5.82 21.02 7 14.14 2 9.27 8.91 8.26 12 2"/></svg><svg width="10" height="10" viewBox="0 0 24 24" fill="#e5e7eb" stroke="#e5e7eb" stroke-width="2" stroke-linejoin="round"><polygon points="12 2 15.09 8.26 22 9.27 17 14.14 18.18 21.02 12 17.77 5.82 21.02 7 14.14 2 9.27 8.91 8.26 12 2"/></svg></span></div>
<div class="td" style="left:409px;top:288.5px;letter-spacing:-0.19px">Hernández, C. & Díaz,</div>
<div class="td" style="left:409px;top:308.5px;letter-spacing:0px">P.</div>
<div class="td" style="left:589px;top:288.5px;letter-spacing:0.05px">Población latina (30-</div>
<div class="td" style="left:589px;top:308.5px;letter-spacing:0px">65 años)</div>
<div class="td" style="left:769px;top:298.5px;letter-spacing:0px">Cohorte prospectiva</div>
<div class="sep" style="top:344px"></div>
<div class="cb" style="left:16px;top:371px"></div>
<div class="dot" style="left:64px;top:376px;background:#ef2c3d;box-shadow:0 0 0 2px rgba(239,68,68,.3)"></div>
<div class="ttl" style="left:84.3px;top:363px;letter-spacing:0.1px">Efectividad de la telemedicina en zo...</div>
<div class="sz" style="left:84.3px;top:383px;letter-spacing:0.22px">4.4 MB</div>
<div class="td" style="left:409px;top:371.5px;letter-spacing:-0.12px">Vargas, L. et al.</div>
<div class="td" style="left:589px;top:371.5px;letter-spacing:-0.08px">Comunidades rurales</div>
<div class="td" style="left:769px;top:361.5px;letter-spacing:0px">Estudio mixto (cualitativo-</div>
<div class="td" style="left:769px;top:381.5px;letter-spacing:0px">cuantitativo)</div>
<div class="sep" style="top:417px"></div>
<div class="cb" style="left:16px;top:444px"></div>
<div class="ttl" style="left:64.3px;top:436px;letter-spacing:0.16px">Biomarcadores en diagnóstico temp...</div>
<div class="sz" style="left:64.3px;top:456px;letter-spacing:0.22px">5.2 MB</div>
<div class="td" style="left:409px;top:434.5px;letter-spacing:-0.17px">Moreno, F. & Sánchez,</div>
<div class="td" style="left:409px;top:454.5px;letter-spacing:0px">T.</div>
<div class="td" style="left:589px;top:434.5px;letter-spacing:-0.11px">Pacientes con</div>
<div class="td" style="left:589px;top:454.5px;letter-spacing:0.05px">deterioro cognitivo...</div>
<div class="td" style="left:769px;top:444.5px;letter-spacing:0px">Estudio longitudinal</div>
</div>
  <div id="tool"><div style="position:absolute;left:0;top:1px">
<div class="btn" style="left:32px;top:13px;width:98px;height:42px;padding:4px 0 0 18px;letter-spacing:-0.05px"><svg width="12" height="12" viewBox="0 0 24 24" fill="none" stroke="#6b7280" stroke-width="1.5" stroke-linecap="round" stroke-linejoin="round" style="position:absolute;left:10px;top:14px"><path d="M12 4.5v15m7.5-7.5h-15"/></svg>Columnas<br>(4)</div>
<div class="chip" style="left:138px;top:9px;width:130px"><svg width="8" height="12" viewBox="0 0 8 12" style="position:absolute;left:10px;top:4px"><g fill="#d3d6dc"><circle cx="2" cy="2" r=".8"/><circle cx="6" cy="2" r=".8"/><circle cx="2" cy="6" r=".8"/><circle cx="6" cy="6" r=".8"/><circle cx="2" cy="10" r=".8"/><circle cx="6" cy="10" r=".8"/></g></svg><span style="position:absolute;left:24px;top:1px;letter-spacing:0.01px">Population</span><svg width="12" height="12" viewBox="0 0 24 24" fill="none" stroke="#9ca3af" stroke-width="1.5" stroke-linecap="round" stroke-linejoin="round" style="position:absolute;right:27px;top:4px"><path d="m16.862 4.487 1.687-1.688a1.875 1.875 0 1 1 2.652 2.652L6.832 19.82a4.5 4.5 0 0 1-1.897 1.13l-2.685.8.8-2.685a4.5 4.5 0 0 1 1.13-1.897L16.863 4.487Zm0 0L19.5 7.125"/></svg><svg width="12" height="12" viewBox="0 0 24 24" fill="none" stroke="#6b7280" stroke-width="1.5" stroke-linecap="round" stroke-linejoin="round" style="position:absolute;right:9px;top:4px"><path d="M6 18 18 6M6 6l12 12"/></svg></div>
<div class="chip" style="left:274px;top:9px;width:144px"><svg width="8" height="12" viewBox="0 0 8 12" style="position:absolute;left:10px;top:4px"><g fill="#d3d6dc"><circle cx="2" cy="2" r=".8"/><circle cx="6" cy="2" r=".8"/><circle cx="2" cy="6" r=".8"/><circle cx="6" cy="6" r=".8"/><circle cx="2" cy="10" r=".8"/><circle cx="6" cy="10" r=".8"/></g></svg><span style="position:absolute;left:24px;top:1px;letter-spacing:0.17px">Methodology</span><svg width="12" height="12" viewBox="0 0 24 24" fill="none" stroke="#9ca3af" stroke-width="1.5" stroke-linecap="round" stroke-linejoin="round" style="position:absolute;right:27px;top:4px"><path d="m16.862 4.487 1.687-1.688a1.875 1.875 0 1 1 2.652 2.652L6.832 19.82a4.5 4.5 0 0 1-1.897 1.13l-2.685.8.8-2.685a4.5 4.5 0 0 1 1.13-1.897L16.863 4.487Zm0 0L19.5 7.125"/></svg><svg width="12" height="12" viewBox="0 0 24 24" fill="none" stroke="#6b7280" stroke-width="1.5" stroke-linecap="round" stroke-linejoin="round" style="position:absolute;right:9px;top:4px"><path d="M6 18 18 6M6 6l12 12"/></svg></div>
<div class="chip" style="left:138px;top:37px;width:142px"><svg width="8" height="12" viewBox="0 0 8 12" style="position:absolute;left:10px;top:4px"><g fill="#d3d6dc"><circle cx="2" cy="2" r=".8"/><circle cx="6" cy="2" r=".8"/><circle cx="2" cy="6" r=".8"/><circle cx="6" cy="6" r=".8"/><circle cx="2" cy="10" r=".8"/><circle cx="6" cy="10" r=".8"/></g></svg><span style="position:absolute;left:24px;top:1px;letter-spacing:-0.1px">Key Findings</span><svg width="12" height="12" viewBox="0 0 24 24" fill="none" stroke="#9ca3af" stroke-width="1.5" stroke-linecap="round" stroke-linejoin="round" style="position:absolute;right:27px;top:4px"><path d="m16.862 4.487 1.687-1.688a1.875 1.875 0 1 1 2.652 2.652L6.832 19.82a4.5 4.5 0 0 1-1.897 1.13l-2.685.8.8-2.685a4.5 4.5 0 0 1 1.13-1.897L16.863 4.487Zm0 0L19.5 7.125"/></svg><svg width="12" height="12" viewBox="0 0 24 24" fill="none" stroke="#6b7280" stroke-width="1.5" stroke-linecap="round" stroke-linejoin="round" style="position:absolute;right:9px;top:4px"><path d="M6 18 18 6M6 6l12 12"/></svg></div>
<div class="chip" style="left:286px;top:37px;width:139px"><svg width="8" height="12" viewBox="0 0 8 12" style="position:absolute;left:10px;top:4px"><g fill="#d3d6dc"><circle cx="2" cy="2" r=".8"/><circle cx="6" cy="2" r=".8"/><circle cx="2" cy="6" r=".8"/><circle cx="6" cy="6" r=".8"/><circle cx="2" cy="10" r=".8"/><circle cx="6" cy="10" r=".8"/></g></svg><span style="position:absolute;left:24px;top:1px;letter-spacing:-0.17px">Sample Size</span><svg width="12" height="12" viewBox="0 0 24 24" fill="none" stroke="#9ca3af" stroke-width="1.5" stroke-linecap="round" stroke-linejoin="round" style="position:absolute;right:27px;top:4px"><path d="m16.862 4.487 1.687-1.688a1.875 1.875 0 1 1 2.652 2.652L6.832 19.82a4.5 4.5 0 0 1-1.897 1.13l-2.685.8.8-2.685a4.5 4.5 0 0 1 1.13-1.897L16.863 4.487Zm0 0L19.5 7.125"/></svg><svg width="12" height="12" viewBox="0 0 24 24" fill="none" stroke="#6b7280" stroke-width="1.5" stroke-linecap="round" stroke-linejoin="round" style="position:absolute;right:9px;top:4px"><path d="M6 18 18 6M6 6l12 12"/></svg></div>
<div class="btn" style="left:505px;top:13px;width:89px;height:42px;padding:4px 0 0 15px;letter-spacing:0.08px"><svg width="10" height="10" viewBox="0 0 24 24" fill="none" stroke="#7b818d" stroke-width="1.7" stroke-linecap="round" stroke-linejoin="round" style="position:absolute;left:10px;top:15px"><path d="M19.5 14.25v-2.625a3.375 3.375 0 0 0-3.375-3.375h-1.5A1.125 1.125 0 0 1 13.5 7.125v-1.5a3.375 3.375 0 0 0-3.375-3.375H8.25m2.25 0H5.625c-.621 0-1.125.504-1.125 1.125v17.25c0 .621.504 1.125 1.125 1.125h12.75c.621 0 1.125-.504 1.125-1.125V11.25a9 9 0 0 0-9-9Z"/></svg>Tipo de<br>archivo</div>
<div class="btn" style="left:610px;top:13px;width:91px;height:42px;padding:4px 0 0 15px;letter-spacing:0.12px"><svg width="10" height="10" viewBox="0 0 24 24" fill="none" stroke="#7b818d" stroke-width="1.7" stroke-linecap="round" stroke-linejoin="round" style="position:absolute;left:10px;top:15px"><path d="M3 16.5v2.25A2.25 2.25 0 0 0 5.25 21h13.5A2.25 2.25 0 0 0 21 18.75V16.5M16.5 12 12 16.5m0 0L7.5 12m4.5 4.5V3"/></svg>Importar<br>refs</div>
<div class="btn" style="left:709px;top:21px;width:79px;height:26px;padding:4px 0 0 20px;letter-spacing:-0.05px"><svg width="14" height="14" viewBox="0 0 24 24" fill="none" stroke="#6b7280" stroke-width="1.5" stroke-linecap="round" stroke-linejoin="round" style="position:absolute;left:10px;top:5px"><path d="M3 16.5v2.25A2.25 2.25 0 0 0 5.25 21h13.5A2.25 2.25 0 0 0 21 18.75V16.5m-13.5-9L12 3m0 0 4.5 4.5M12 3v13.5"/></svg>Export</div>
<div class="btn" style="left:796px;top:22px;width:100px;height:26px;padding:4px 0 0 10px;text-align:left">Sort:<span style="color:#111827;margin-left:7px;-webkit-text-stroke:0.3px #111827">Date</span><svg width="12" height="12" viewBox="0 0 24 24" fill="none" stroke="#4b5563" stroke-width="1.7" stroke-linecap="round" stroke-linejoin="round" style="position:absolute;right:11px;top:7px"><path d="m19.5 8.25-7.5 7.5-7.5-7.5"/></svg></div>
</div></div>
</div>
</body>
</html>
